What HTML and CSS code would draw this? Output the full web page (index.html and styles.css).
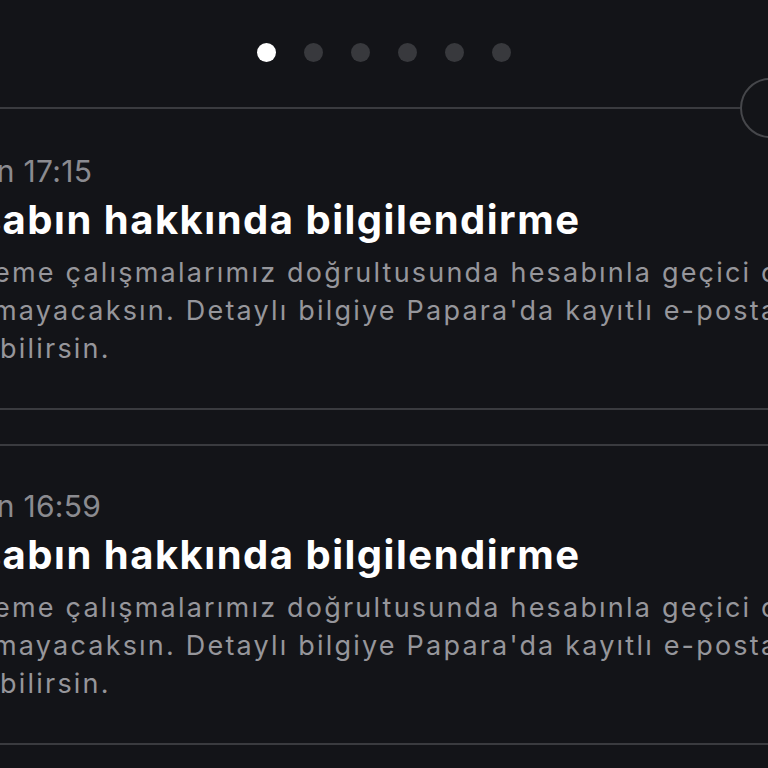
FILE: index.html
```html
<!DOCTYPE html>
<html lang="tr">
<head>
    <meta charset="UTF-8">
    <meta name="viewport" content="width=device-width, initial-scale=1.0">
    <title>Bildirimler</title>
    <link rel="stylesheet" href="styles.css">
</head>
<body>
    <div class="pager">
        <span class="dot active"></span>
        <span class="dot"></span>
        <span class="dot"></span>
        <span class="dot"></span>
        <span class="dot"></span>
        <span class="dot"></span>
    </div>

    <div class="feed">
        <div class="feed-head">
            <div class="feed-line"></div>
            <div class="feed-ring"></div>
        </div>

        <div class="note first">
            <div class="note-text">
                <div class="note-time">Bugün 17:15</div>
                <div class="note-title">Hesabın hakkında bilgilendirme</div>
                <div class="note-body">
                    <span class="line">Yenileme çalışmalarımız doğrultusunda hesabınla geçici olarak</span>
                    <span class="line">yapamayacaksın. Detaylı bilgiye Papara'da kayıtlı e-posta adresinden</span>
                    <span class="line">ulaşabilirsin.</span>
                </div>
            </div>
        </div>

        <div class="note">
            <div class="note-text">
                <div class="note-time">Bugün 16:59</div>
                <div class="note-title">Hesabın hakkında bilgilendirme</div>
                <div class="note-body">
                    <span class="line">Yenileme çalışmalarımız doğrultusunda hesabınla geçici olarak</span>
                    <span class="line">yapamayacaksın. Detaylı bilgiye Papara'da kayıtlı e-posta adresinden</span>
                    <span class="line">ulaşabilirsin.</span>
                </div>
            </div>
        </div>
    </div>
</body>
</html>
```

FILE: styles.css
```css
/* Papara notifications, dark theme */
body {
    background-color: #131418;
    font-family: Inter, "Noto Sans", sans-serif;
    color: #ffffff;
    margin: 0;
    padding: 0;
    overflow: hidden;
    height: 768px;
}

.pager {
    display: flex;
    justify-content: center;
    gap: 28px;
    margin-top: 43px;
}

.dot {
    width: 19px;
    height: 19px;
    border-radius: 50%;
    background-color: #38393d;
}

.dot.active {
    background-color: #ffffff;
}

.feed {
    margin-top: 45px;
    width: 800px;
}

.feed-head {
    display: flex;
    align-items: center;
    height: 2px;
}

.feed-line {
    flex: 1;
    height: 2px;
    background-color: #3a3b3f;
}

.feed-ring {
    flex-shrink: 0;
    width: 56px;
    height: 56px;
    margin: -29px 0;
    border: 2px solid #46474b;
    border-radius: 50%;
}

.note {
    border-top: 2px solid #3a3b3f;
    border-bottom: 2px solid #3a3b3f;
    padding: 42px 0 40px 0;
    margin-top: 34px;
    white-space: nowrap;
}

.note.first {
    border-top: none;
    margin-top: 0;
    padding-top: 44px;
}

.note-text {
    margin-left: -78px;
}

.note-time {
    font-size: 30px;
    line-height: 36px;
    letter-spacing: 0.3px;
    color: #8b8b90;
}

.note-title {
    margin-top: 9px;
    font-size: 40px;
    line-height: 44px;
    font-weight: 700;
    letter-spacing: 1.5px;
    color: #ffffff;
}

.note-body {
    margin-top: 12px;
    font-size: 27px;
    line-height: 38px;
    letter-spacing: 2.2px;
    color: #96969b;
}

.note-body .line {
    display: block;
}
```
